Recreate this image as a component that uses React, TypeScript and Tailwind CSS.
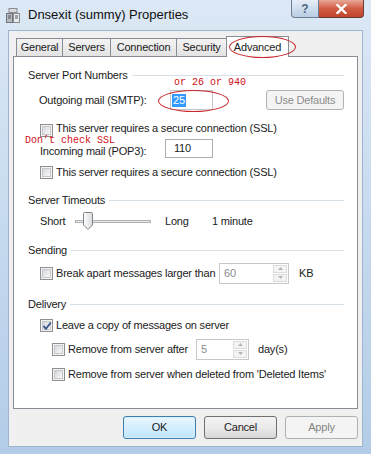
import React from 'react';

function Check({ checked = false }: { checked?: boolean }) {
    return (
        <span className="relative flex h-[13px] w-[13px] shrink-0 items-center justify-center border border-[#8e8f8f] bg-[#f4f4f4]">
            <span className="h-[9px] w-[9px] border border-[#c4c8cd] bg-linear-to-br from-[#d5d8dd] to-[#f8f8f8]" />
            {checked && (
                <svg className="absolute left-[1px] top-[1px]" width="10" height="10" viewBox="0 0 10 10">
                    <path d="M1.5 5 L4 7.8 L8.8 1.5" fill="none" stroke="#3d5a8f" strokeWidth="1.9" />
                </svg>
            )}
        </span>
    );
}

function Group({ label, className = '' }: { label: string; className?: string }) {
    return (
        <div className={`flex h-[14px] items-center gap-[4px] ${className}`}>
            <span className="whitespace-nowrap">{label}</span>
            <div className="h-px flex-1 bg-[#d5dfe5]" />
        </div>
    );
}

function Spin({ value, width }: { value: string; width: string }) {
    return (
        <div className={`flex h-[21px] ${width} shrink-0 items-stretch border border-[#c5c8cc] bg-white`}>
            <span className="flex flex-1 items-center pl-[4px] text-[#8b8b8b]">{value}</span>
            <div className="flex w-[16px] flex-col gap-px p-px">
                <div className="flex flex-1 items-center justify-center border border-[#dcdcdc] bg-[#f4f4f4]">
                    <svg width="5" height="3" viewBox="0 0 5 3"><path d="M0 3 L2.5 0 L5 3 Z" fill="#b5b5b5" /></svg>
                </div>
                <div className="flex flex-1 items-center justify-center border border-[#dcdcdc] bg-[#f4f4f4]">
                    <svg width="5" height="3" viewBox="0 0 5 3"><path d="M0 0 L2.5 3 L5 0 Z" fill="#b5b5b5" /></svg>
                </div>
            </div>
        </div>
    );
}

const tabs = [
    { name: 'General', w: 'w-[47px]' },
    { name: 'Servers', w: 'w-[49px]' },
    { name: 'Connection', w: 'w-[67px]' },
    { name: 'Security', w: 'w-[51px]' },
];

export default function App() {
    return (
        <div className="flex h-[454px] w-[371px] flex-col bg-linear-to-b from-[#dce8f5] via-[#c6daef] to-[#b3cce7] font-['Liberation_Sans',Arial,sans-serif] text-[11px] text-[#1b1b1b]">
            {/* Title bar */}
            <div className="flex h-[30px] shrink-0 items-start">
                <div className="flex h-[30px] items-center pl-[6px]">
                    <svg width="14" height="15" viewBox="0 0 14 15">
                        <rect x="3" y="0.5" width="8" height="4" fill="#d7d9dc" stroke="#8a8d92" />
                        <rect x="0.5" y="5.5" width="6" height="9" fill="#b7bbc1" stroke="#6f737a" />
                        <rect x="7.5" y="5.5" width="6" height="9" fill="#e9eaec" stroke="#8a8d92" />
                        <path d="M2 8h3M2 10h3M9 8h3M9 10h3" stroke="#55595f" />
                    </svg>
                    <span className="ml-[8px] text-[13px] text-[#111]">Dnsexit (summy) Properties</span>
                </div>
                <div className="ml-auto mr-[7px] flex">
                    <div className="flex h-[18px] w-[28px] items-center justify-center rounded-bl-[4px] border border-t-0 border-[#6d7d92] bg-linear-to-b from-[#e6eef7] to-[#b9cde3] text-[12px] font-bold text-[#4f6580]">
                        ?
                    </div>
                    <div className="flex h-[18px] w-[45px] items-center justify-center rounded-br-[4px] border border-l-0 border-t-0 border-[#6b3b33] bg-linear-to-b from-[#e9a898] via-[#d15c45] to-[#c0452c]">
                        <svg width="11" height="10" viewBox="0 0 11 10">
                            <path d="M1.5 1 L9.5 9 M9.5 1 L1.5 9" stroke="#fff" strokeWidth="2.4" strokeLinecap="square" />
                        </svg>
                    </div>
                </div>
            </div>

            {/* Client area */}
            <div className="mx-[8px] flex h-[417px] flex-col border border-[#9fb5cf] bg-[#f0f0f0] px-[4px] pt-[5px] tracking-[-0.2px]">
                {/* Tabs */}
                <div className="relative flex h-[20px] items-end pl-[3px]">
                    {tabs.map((t, i) => (
                        <div
                            key={t.name}
                            className={`flex h-[18px] ${t.w} ${i > 0 ? '-ml-px' : ''} items-center justify-center border border-b-0 border-[#898c95] bg-linear-to-b from-[#f3f3f3] to-[#e3e3e3]`}
                        >
                            {t.name}
                        </div>
                    ))}
                    <div className="relative z-10 -mb-px -ml-px flex h-[21px] w-[63px] items-start justify-center border border-b-0 border-[#898c95] bg-white pt-[2px]">
                        Advanced
                    </div>
                    <div className="absolute left-[216px] top-0 z-20 h-[22px] w-[67px] rounded-[50%] border border-[#c8282e]" />
                </div>

                {/* Panel */}
                <div className="relative flex h-[353px] flex-col border border-[#898c95] bg-white pl-[14px] pr-[13px] pt-[11px] leading-[13px]">
                    <Group label="Server Port Numbers" />

                    <div className="mt-[8px] flex h-[20px] items-center">
                        <span className="ml-[11px] w-[131px]">Outgoing mail (SMTP):</span>
                        <div className="flex h-[20px] w-[43px] items-center border border-[#c3c6ca] bg-white pl-[1px]">
                            <span className="bg-[#3399ff] px-px leading-[13px] text-white">25</span>
                        </div>
                        <div className="ml-auto flex h-[20px] w-[78px] items-center justify-center rounded-[3px] border border-[#adb2b5] bg-[#f4f4f4] text-[#8d8d8d]">
                            Use Defaults
                        </div>
                    </div>

                    <div className="mt-[13px] flex h-[14px] items-center gap-[3px] pl-[12px]">
                        <Check />
                        <span className="mb-[4px] leading-[11px]">This server requires a secure connection (SSL)</span>
                    </div>

                    <div className="mt-[1px] flex h-[20px] items-center">
                        <span className="ml-[12px] mt-[6px] w-[125px] leading-[10px]">Incoming mail (POP3):</span>
                        <div className="flex h-[19px] w-[48px] items-center border border-[#abadb3] bg-white pl-[8px]">110</div>
                    </div>

                    <div className="mt-[7px] flex h-[14px] items-center gap-[3px] pl-[12px]">
                        <Check />
                        <span>This server requires a secure connection (SSL)</span>
                    </div>

                    <Group label="Server Timeouts" className="mt-[14px]" />

                    <div className="mt-[4px] flex h-[20px] items-center">
                        <span className="ml-[12px] w-[35px]">Short</span>
                        <div className="relative h-[20px] w-[76px]">
                            <div className="absolute left-0 right-0 top-[9px] h-[3px] border border-[#b0b0b0] bg-[#e7eaec]" />
                            <svg className="absolute left-[8px] top-[1px]" width="10" height="18" viewBox="0 0 10 18">
                                <defs>
                                    <linearGradient id="th" x1="0" x2="1" y1="0" y2="0">
                                        <stop offset="0" stopColor="#fdfdfd" />
                                        <stop offset="1" stopColor="#d9dcdf" />
                                    </linearGradient>
                                </defs>
                                <path d="M1.5 0.5 H8.5 Q9.5 0.5 9.5 1.5 V13 L5 17.5 L0.5 13 V1.5 Q0.5 0.5 1.5 0.5 Z" fill="url(#th)" stroke="#808489" />
                            </svg>
                        </div>
                        <span className="ml-[14px] w-[47px]">Long</span>
                        <span>1 minute</span>
                    </div>

                    <Group label="Sending" className="mt-[12px]" />

                    <div className="mt-[5px] flex h-[22px] items-center">
                        <div className="ml-[12px] flex w-[179px] shrink-0 items-center gap-[3px] whitespace-nowrap">
                            <Check />
                            <span>Break apart messages larger than</span>
                        </div>
                        <Spin value="60" width="w-[70px]" />
                        <span className="ml-[10px]">KB</span>
                    </div>

                    <Group label="Delivery" className="mt-[13px]" />

                    <div className="mt-[7px] flex h-[14px] items-center gap-[3px] pl-[12px]">
                        <Check checked />
                        <span>Leave a copy of messages on server</span>
                    </div>

                    <div className="mt-[7px] flex h-[20px] items-center">
                        <div className="ml-[24px] flex w-[144px] shrink-0 items-center gap-[3px] whitespace-nowrap">
                            <Check />
                            <span>Remove from server after</span>
                        </div>
                        <Spin value="5" width="w-[53px]" />
                        <span className="ml-[9px]">day(s)</span>
                    </div>

                    <div className="mt-[8px] flex h-[14px] items-center gap-[3px] pl-[24px]">
                        <Check />
                        <span>Remove from server when deleted from 'Deleted Items'</span>
                    </div>

                    {/* Annotations */}
                    <span className="absolute left-[160px] top-[21px] font-['Liberation_Mono',monospace] text-[10px] leading-[10px] tracking-normal text-[#d0101a]">
                        or 26 or 940
                    </span>
                    <span className="absolute left-[11px] top-[79px] font-['Liberation_Mono',monospace] text-[10px] leading-[9px] tracking-normal text-[#d0101a]">
                        Don’t check SSL
                    </span>
                    <div className="absolute left-[144px] top-[33px] h-[22px] w-[71px] rounded-[50%] border border-[#c8282e]" />
                </div>

                {/* Buttons */}
                <div className="mt-[7px] flex justify-end gap-[8px]">
                    <div className="flex h-[23px] w-[73px] items-center justify-center rounded-[3px] border border-[#3c7fb1] bg-linear-to-b from-[#eaf6fd] to-[#bee6fd] shadow-[inset_0_0_0_1px_#d9f0fc]">
                        OK
                    </div>
                    <div className="flex h-[23px] w-[73px] items-center justify-center rounded-[3px] border border-[#707070] bg-linear-to-b from-[#f2f2f2] via-[#ebebeb] to-[#d6d6d6]">
                        Cancel
                    </div>
                    <div className="flex h-[23px] w-[73px] items-center justify-center rounded-[3px] border border-[#adb2b5] bg-[#f4f4f4] text-[#838383]">
                        Apply
                    </div>
                </div>
            </div>
        </div>
    );
}
